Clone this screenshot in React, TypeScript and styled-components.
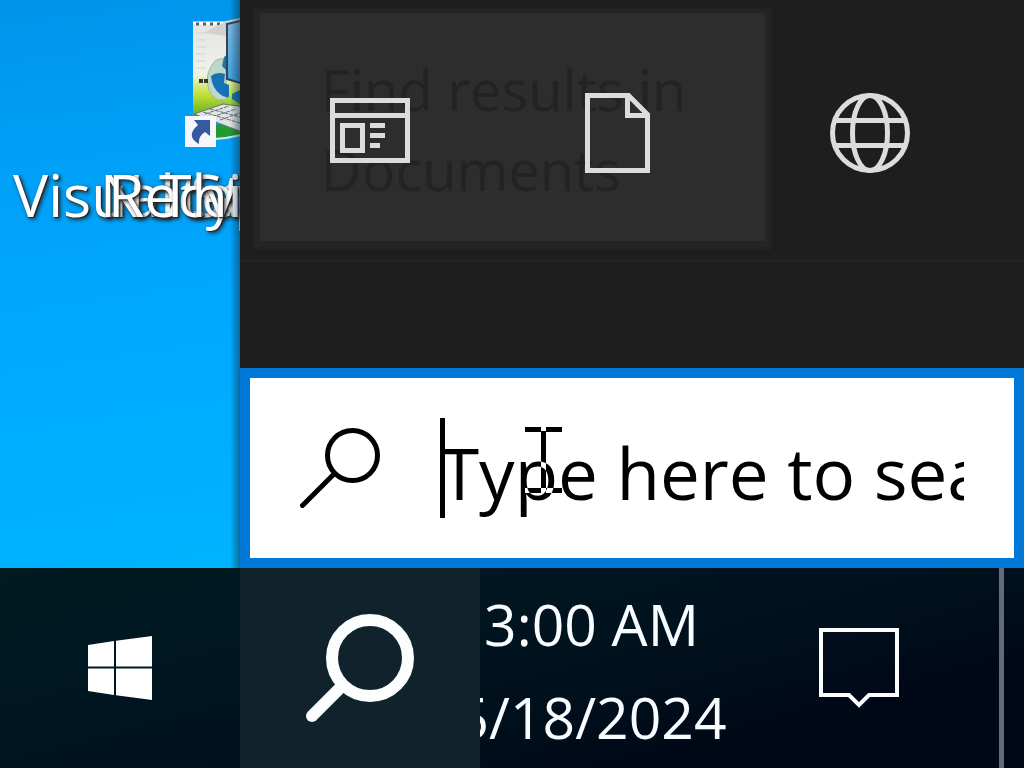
import React from "react";
import styled, { createGlobalStyle } from "styled-components";

const GlobalStyle = createGlobalStyle`
  * { box-sizing: border-box; }
  body { margin: 0; font-family: "Open Sans", "Noto Sans", sans-serif; }
  button { border: 0; padding: 0; background: none; font: inherit; color: inherit; }
`;

const Screen = styled.div`
  display: flex;
  flex-direction: column;
  min-height: 100vh;
  overflow: hidden;
`;

const Main = styled.main`
  display: flex;
  flex: 1;
`;

const Desktop = styled.section`
  position: relative;
  flex: 0 0 240px;
  overflow: hidden;
  background: linear-gradient(172deg, #0094ea 0%, #009ff7 25%, #00a8ff 55%, #00b4ff 100%);

  &::after {
    content: "";
    position: absolute;
    inset: 0 0 0 auto;
    width: 10px;
    background: linear-gradient(90deg, transparent, rgba(20, 40, 60, 0.5));
  }
`;

const DesktopIcon = styled.svg`
  position: absolute;
  left: 180px;
  top: 16px;
`;

const DesktopLabel = styled.span<{ $left: number }>`
  position: absolute;
  left: ${(p) => p.$left}px;
  top: 154px;
  font-size: 59px;
  line-height: 80px;
  white-space: nowrap;
  color: #fff;
  text-shadow: 1px 1px 1px #222, 2px 2px 4px #222;
`;

const SearchPanel = styled.section`
  display: flex;
  flex-direction: column;
  flex: 1;
  min-width: 0;
  background: #1e1e1e;
`;

const Results = styled.div`
  position: relative;
  flex: 1;
`;

const Tooltip = styled.div`
  position: absolute;
  left: 20px;
  top: 13px;
  width: 505px;
  height: 228px;
  padding: 36px 61px;
  background: #2d2d2d;
  box-shadow: 0 2px 3px 7px #242424;
  font-size: 56px;
  line-height: 80px;
  color: #232323;
`;

const Tabs = styled.nav`
  position: relative;
  display: flex;
  height: 262px;
  padding: 6px 29px 0 5px;
  border-bottom: 2px solid #232323;
`;

const Tab = styled.button`
  flex: 1;
  display: flex;
  align-items: center;
  justify-content: center;
  color: #dcdcdc;
`;

const SearchBox = styled.label`
  position: relative;
  display: flex;
  align-items: center;
  height: 200px;
  padding: 0 50px;
  gap: 60px;
  border: 10px solid #0078d7;
  background: #fff;
`;

const SearchInput = styled.input`
  flex: 1;
  min-width: 0;
  height: 100px;
  padding: 8px 0 0;
  border: 0;
  outline: 0;
  background: linear-gradient(#000, #000) left / 5px 100% no-repeat;
  font: 71px "Open Sans", "Noto Sans", sans-serif;
  color: #000;
  &::placeholder { color: #000; opacity: 1; }
`;

const Pointer = styled.svg`
  position: absolute;
  left: 275px;
  top: 48px;
  mix-blend-mode: difference;
`;

const Taskbar = styled.footer`
  display: flex;
  height: 200px;
  color: #f8fcff;
  background: linear-gradient(165deg, #001a20 0%, #001822 25%, #00101c 60%, #000716 80%, #000818 100%);
`;

const TaskButton = styled.button<{ $width: number; $active?: boolean }>`
  position: relative;
  z-index: 1;
  display: flex;
  align-items: center;
  justify-content: center;
  flex: 0 0 ${(p) => p.$width}px;
  background: ${(p) => (p.$active ? "#10232d" : "transparent")};
`;

const Clock = styled.button`
  display: flex;
  flex-direction: column;
  align-items: center;
  justify-content: center;
  flex: 1;
  min-width: 0;
  padding: 6px 16px 0 0;
  font-size: 57px;
  line-height: 93px;
  white-space: nowrap;
`;

const ShowDesktop = styled.button`
  flex: 0 0 25px;
  border-left: 5px solid #646a7c;
`;

export default function App() {
  return (
    <>
      <GlobalStyle />
      <Screen>
        <Main>
          <Desktop aria-label="Desktop">
            <DesktopIcon width="100" height="136" viewBox="180 16 100 136" aria-hidden="true">
              <defs>
                <linearGradient id="paper" x1="0" y1="0" x2="0" y2="1">
                  <stop offset="0" stopColor="#e4e4e4" />
                  <stop offset=".55" stopColor="#f0f2ea" />
                  <stop offset=".78" stopColor="#c2e035" />
                  <stop offset="1" stopColor="#67b020" />
                </linearGradient>
                <linearGradient id="display" x1="0" y1="0" x2="0" y2="1">
                  <stop offset="0" stopColor="#7fb8e2" />
                  <stop offset="1" stopColor="#3aa0e0" />
                </linearGradient>
              </defs>
              <path d="M193 23h87v92h-87z" fill="url(#paper)" />
              <path d="M193 23h40" stroke="#fff" strokeWidth="3" />
              <path d="M196 24h38" stroke="#48606c" strokeWidth="3" strokeDasharray="3 4" />
              <path d="M196 33h10M196 40h10M196 47h10M196 54h10M196 61h10M196 68h10" stroke="#d2d5d8" />
              <path d="M204 33l22-12 14-3v20z" fill="#d4d0ce" />
              <path d="M215 61q6-4 11-1v40h-8q-8-4-10-14-3-14 7-25z" fill="#bdd8ca" stroke="#a0b4a4" />
              <path d="M211 76q6-5 14-2l-1 9 5 2v12q-5 1-9-3-8-6-9-18z" fill="#1672b4" />
              <path d="M222 66l2-9 4-3v18zM232 94l8-4v14l-8-5z" fill="#1878ae" />
              <path d="M227 24l30-7v71l-30-9z" fill="url(#display)" stroke="#324651" strokeWidth="2" />
              <path d="M199 81h9" stroke="#2e3a22" strokeWidth="4" strokeDasharray="4 1" />
              <path d="M215 125l25-2v12l-24 3z" fill="#229a32" />
              <path d="M194 114l29-10 30 4v28z" fill="#dfe3e4" stroke="#69716e" />
              <path d="M205 114l24-8M212 117l24-8M220 120l20-7M210 109l30 8M203 112l37 11" stroke="#66706f" strokeDasharray="4 1" />
              <path d="M215 139q14-1 26-4" stroke="#d8eee0" strokeWidth="2" fill="none" />
              <path d="M185 116h31v31h-31z" fill="#f4f6fa" />
              <path d="M194 120h16v16l-5-4q-7 4-6 12-14-8-1-19z" fill="#3659a0" />
            </DesktopIcon>
            <DesktopLabel $left={13}>Visual Studio Code</DesktopLabel>
            <DesktopLabel $left={100}>Notepad++</DesktopLabel>
            <DesktopLabel $left={108}>Recycle Bin</DesktopLabel>
            <DesktopLabel $left={159}>This PC</DesktopLabel>
          </Desktop>
          <SearchPanel aria-label="Search">
            <Results>
              <Tooltip>Find results in Documents</Tooltip>
              <Tabs>
                <Tab aria-label="Apps">
                  <svg width="80" height="80" viewBox="0 -5 80 80" fill="none" stroke="currentColor" strokeWidth="5">
                    <path d="M2.500 2.500h75v60h-75zM2.500 17.500h75M12.500 27.500h20v25h-20zM40 27.500h15M40 37.500h15M40 47.500h10" />
                  </svg>
                </Tab>
                <Tab aria-label="Documents">
                  <svg width="70" height="80" viewBox="0 0 70 80" fill="none" stroke="currentColor" strokeWidth="5">
                    <path d="M2.500 2.500h41l19 19v56h-60zM42.500 2.500v20h20" />
                  </svg>
                </Tab>
                <Tab aria-label="Web">
                  <svg width="80" height="80" viewBox="0 0 80 80" fill="none" stroke="currentColor" strokeWidth="5">
                    <circle cx="40" cy="40" r="37.500" />
                    <ellipse cx="40" cy="40" rx="17.500" ry="37.500" />
                    <path d="M5 27.500h70M5 52.500h70" />
                  </svg>
                </Tab>
              </Tabs>
            </Results>
            <SearchBox>
              <svg width="80" height="80" viewBox="0 0 80 80" fill="none" stroke="#000" strokeWidth="5" strokeLinecap="round" aria-hidden="true">
                <circle cx="52.500" cy="27.500" r="25" />
                <path d="M34.500 45.500L2.500 77.500" />
              </svg>
              <SearchInput type="text" aria-label="Search" placeholder="Type here to search" />
              <Pointer width="38" height="68" viewBox="0 0 38 68" fill="none" stroke="#fff" strokeWidth="5" aria-hidden="true">
                <path d="M0 3.500h16M21 3.500h16M18.500 5v57M0 64.500h16M21 64.500h16" />
              </Pointer>
            </SearchBox>
          </SearchPanel>
        </Main>
        <Taskbar>
          <TaskButton $width={240} aria-label="Start">
            <svg width="64" height="64" viewBox="0 0 64 64" fill="#fff">
              <path d="M0 9l26-4v25.500H0zM28 4.700L64 0v30.500H28zM0 32.500h26V59L0 55zM28 32.500h36V64l-36-4.700z" />
            </svg>
          </TaskButton>
          <TaskButton $width={240} $active aria-label="Search">
            <svg width="108" height="108" viewBox="0 0 108 108" fill="none" stroke="#fbfdff" strokeWidth="12" strokeLinecap="round">
              <circle cx="64" cy="44" r="38" />
              <path d="M36 72L6 102" />
            </svg>
          </TaskButton>
          <Clock>
            <span>3:00 AM</span>
            <span>5/18/2024</span>
          </Clock>
          <TaskButton $width={280} aria-label="Notifications">
            <svg width="80" height="80" viewBox="0 0 80 80" fill="none" stroke="#fbfdff" strokeWidth="4">
              <path d="M2 2h76v65H50L40 77 30 67H2z" />
            </svg>
          </TaskButton>
          <ShowDesktop aria-label="Show desktop" />
        </Taskbar>
      </Screen>
    </>
  );
}
